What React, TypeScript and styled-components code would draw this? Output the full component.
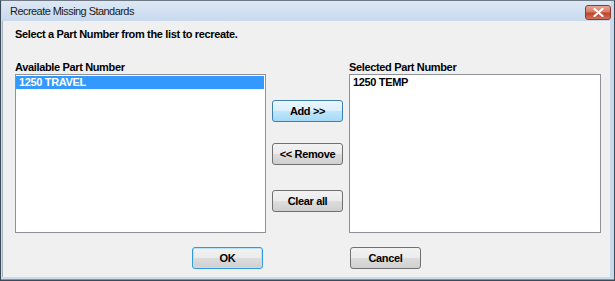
import styled, { createGlobalStyle, css } from 'styled-components'

const GlobalStyle = createGlobalStyle`
  html, body {
    margin: 0;
    padding: 0;
    background: #ffffff;
  }
  body {
    font-family: "Liberation Sans", Arial, sans-serif;
  }
`

const available = ['1250 TRAVEL']
const selected = ['1250 TEMP']

export default function App() {
  return (
    <>
      <GlobalStyle />
      <Window>
        <TitleBar>
          <Title>Recreate Missing Standards</Title>
          <CloseButton type="button" aria-label="Close">
            <svg width="11" height="9" viewBox="0 0 11 9">
              <path d="M1.5 1 L9.5 8 M9.5 1 L1.5 8" stroke="#ffffff" strokeWidth="2.2" strokeLinecap="round" />
            </svg>
          </CloseButton>
        </TitleBar>
        <Client>
          <Instruction>Select a Part Number from the list to recreate.</Instruction>
          <Lists>
            <Label>Available Part Number</Label>
            <span />
            <Label>Selected Part Number</Label>
            <ListBox>
              {available.map((item) => (
                <Item key={item} $selected>
                  {item}
                </Item>
              ))}
            </ListBox>
            <Middle>
              <Button type="button" $variant="hover">
                Add &gt;&gt;
              </Button>
              <Button type="button" $top={21}>
                &lt;&lt; Remove
              </Button>
              <Button type="button" $top={25}>
                Clear all
              </Button>
            </Middle>
            <ListBox>
              {selected.map((item) => (
                <Item key={item}>{item}</Item>
              ))}
            </ListBox>
          </Lists>
          <Footer>
            <Button type="button" $variant="default">
              OK
            </Button>
            <Button type="button">Cancel</Button>
          </Footer>
        </Client>
      </Window>
    </>
  )
}

const Window = styled.div`
  box-sizing: border-box;
  width: 615px;
  height: 281px;
  display: flex;
  flex-direction: column;
  border: 1px solid #3d4b59;
  border-top-color: #6f7a85;
  background: #c9daee;
  box-shadow: inset 0 -1px 0 #38b0d8;
  padding: 0 4px 3px 1px;
`

const TitleBar = styled.div`
  height: 20px;
  display: flex;
  align-items: center;
  justify-content: space-between;
  margin-right: -1px;
  padding-left: 8px;
  background: linear-gradient(#dde8f5, #c8d9ed);
`

const Title = styled.div`
  font-family: "Liberation Sans", Arial, sans-serif;
  font-size: 11px;
  color: #1b1b1b;
  letter-spacing: -0.55px;
`

const CloseButton = styled.button`
  box-sizing: border-box;
  width: 26px;
  height: 15px;
  margin-top: 2px;
  padding: 0;
  display: flex;
  align-items: center;
  justify-content: center;
  border: 1px solid #8b3a2c;
  border-radius: 3px;
  background: linear-gradient(#e8a898 0%, #d77a64 45%, #c0432b 55%, #d0705a 100%);
`

const Client = styled.div`
  flex: 1;
  display: flex;
  flex-direction: column;
  background: #f0f0f0;
  border-left: 1px solid #a7b4c2;
  padding: 7px 0 0 12px;
`

const boldText = css`
  font-size: 11px;
  line-height: 13px;
  font-weight: 700;
  letter-spacing: -0.35px;
  color: #000000;
`

const Instruction = styled.div`
  ${boldText}
`

const Lists = styled.div`
  margin-top: 20px;
  display: grid;
  grid-template-columns: 251px 83px 252px;
  grid-template-rows: 13px 159px;
`

const Label = styled.div`
  ${boldText}
`

const ListBox = styled.div`
  box-sizing: border-box;
  height: 159px;
  border: 1px solid #8f9399;
  background: #ffffff;
  padding: 1px 1px 0 0;
`

const Item = styled.div<{ $selected?: boolean }>`
  ${boldText}
  height: 13px;
  padding-left: 3px;
  color: ${({ $selected }) => ($selected ? '#ffffff' : '#000000')};
  background: ${({ $selected }) => ($selected ? '#3399ff' : 'transparent')};
`

const Middle = styled.div`
  display: flex;
  flex-direction: column;
  align-items: center;
  padding-top: 26px;
`

const variants = {
  normal: css`
    border: 1px solid #707070;
    background: linear-gradient(#f2f2f2 0%, #ebebeb 50%, #dddddd 51%, #cfcfcf 100%);
  `,
  hover: css`
    border: 1px solid #3c7fb1;
    background: linear-gradient(#eaf6fd 0%, #d9f0fc 50%, #bee6fd 51%, #a7d9f5 100%);
  `,
  default: css`
    border: 1px solid #3399dd;
    box-shadow: inset 0 0 0 1px #b8e2fa;
    background: linear-gradient(#f2f2f2 0%, #ebebeb 50%, #dddddd 51%, #cfcfcf 100%);
  `,
}

const Button = styled.button<{ $variant?: keyof typeof variants; $top?: number }>`
  box-sizing: border-box;
  width: 71px;
  height: 22px;
  margin-top: ${({ $top }) => $top ?? 0}px;
  padding: 0;
  border-radius: 3px;
  font-family: "Liberation Sans", Arial, sans-serif;
  font-size: 11px;
  font-weight: 700;
  letter-spacing: -0.35px;
  color: #000000;
  ${({ $variant }) => variants[$variant ?? 'normal']}
`

const Footer = styled.div`
  margin-top: 14px;
  display: flex;
  gap: 87px;
  padding-left: 177px;
`
